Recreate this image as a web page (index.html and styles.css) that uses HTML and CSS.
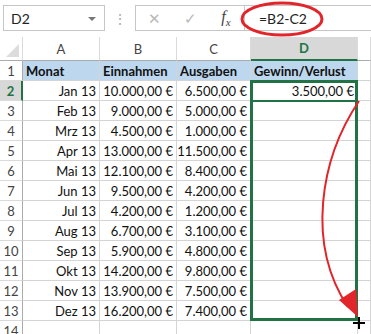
FILE: index.html
```html
<!DOCTYPE html>
<html lang="de">
<head>
  <meta charset="UTF-8" />
  <title>Gewinn/Verlust</title>
  <link rel="stylesheet" href="styles.css">
</head>
<body>

  <div class="fbar">
    <div class="namebox">D2<span class="drop"></span></div>
    <div class="dots">&#8942;</div>
    <div class="btns">
      <span class="btn x">&#10005;</span>
      <span class="btn ok">&#10003;</span>
      <span class="btn fx"><i>f</i><sub>x</sub></span>
    </div>
    <div class="formula">=B2-C2</div>
    <svg class="ring" width="90" height="38" viewBox="0 0 90 38">
      <ellipse cx="43" cy="19" rx="40" ry="16" fill="none" stroke="#e2242b" stroke-width="3"/>
    </svg>
  </div>

  <div class="sheet">
    <div class="hd corner"><span class="tri"></span></div>
    <div class="hd">A</div>
    <div class="hd">B</div>
    <div class="hd">C</div>
    <div class="hd act">D</div>
    <div class="hd"></div>

    <div class="rh">1</div>
    <div class="c th">Monat</div>
    <div class="c th">Einnahmen</div>
    <div class="c th">Ausgaben</div>
    <div class="c th">Gewinn/Verlust</div>
    <div class="c"></div>

    <div class="rh act">2</div>
    <div class="c">Jan 13</div><div class="c">10.000,00 €</div><div class="c">6.500,00 €</div><div class="c">3.500,00 €</div><div class="c"></div>
    <div class="rh">3</div>
    <div class="c">Feb 13</div><div class="c">9.000,00 €</div><div class="c">5.000,00 €</div><div class="c"></div><div class="c"></div>
    <div class="rh">4</div>
    <div class="c">Mrz 13</div><div class="c">4.500,00 €</div><div class="c">1.000,00 €</div><div class="c"></div><div class="c"></div>
    <div class="rh">5</div>
    <div class="c">Apr 13</div><div class="c">13.000,00 €</div><div class="c">11.500,00 €</div><div class="c"></div><div class="c"></div>
    <div class="rh">6</div>
    <div class="c">Mai 13</div><div class="c">12.100,00 €</div><div class="c">8.400,00 €</div><div class="c"></div><div class="c"></div>
    <div class="rh">7</div>
    <div class="c">Jun 13</div><div class="c">9.500,00 €</div><div class="c">4.200,00 €</div><div class="c"></div><div class="c"></div>
    <div class="rh">8</div>
    <div class="c">Jul 13</div><div class="c">4.200,00 €</div><div class="c">1.200,00 €</div><div class="c"></div><div class="c"></div>
    <div class="rh">9</div>
    <div class="c">Aug 13</div><div class="c">6.700,00 €</div><div class="c">3.100,00 €</div><div class="c"></div><div class="c"></div>
    <div class="rh">10</div>
    <div class="c">Sep 13</div><div class="c">5.900,00 €</div><div class="c">4.800,00 €</div><div class="c"></div><div class="c"></div>
    <div class="rh">11</div>
    <div class="c">Okt 13</div><div class="c">14.200,00 €</div><div class="c">9.800,00 €</div><div class="c"></div><div class="c"></div>
    <div class="rh">12</div>
    <div class="c">Nov 13</div><div class="c">13.900,00 €</div><div class="c">7.500,00 €</div><div class="c"></div><div class="c"></div>
    <div class="rh">13</div>
    <div class="c">Dez 13</div><div class="c">16.200,00 €</div><div class="c">7.400,00 €</div><div class="c"></div><div class="c"></div>
    <div class="rh">14</div>
    <div class="c"></div><div class="c"></div><div class="c"></div><div class="c"></div><div class="c"></div>

    <div class="range"></div>
    <div class="cursor"></div>
    <svg class="arrow" width="60" height="230" viewBox="0 0 60 230">
      <path d="M47 2 C 8 60, -6 145, 36 208" fill="none" stroke="#e2242b" stroke-width="2"/>
      <path d="M27 201 L44 190 L46 218 Z" fill="#e2242b"/>
    </svg>
  </div>

</body>
</html>
```

FILE: styles.css
```css
body { margin: 0; width: 371px; height: 334px; overflow: hidden; background: #fff; font-family: Lato, "Open Sans", sans-serif; }

.fbar { position: relative; display: flex; align-items: center; height: 37px; padding: 5px 0 6px 3px; box-sizing: border-box; }
.namebox { position: relative; width: 102px; height: 26px; box-sizing: border-box; border: 1px solid #c6c6c6; padding: 4px 0 0 7px; font-size: 14px; color: #222; }
.drop { position: absolute; right: 8px; top: 11px; border-left: 4px solid transparent; border-right: 4px solid transparent; border-top: 4px solid #777; }
.dots { width: 30px; text-align: center; color: #aaa; font-size: 14px; }
.btns { display: flex; align-items: center; width: 110px; height: 26px; box-sizing: border-box; border: 1px solid #c6c6c6; }
.btn { flex: 1; text-align: center; color: #b8b8b8; font-size: 15px; }
.btn.fx { color: #444; font-family: "Liberation Serif", serif; font-size: 16px; }
.btn.fx sub { font-size: 11px; font-style: italic; }
.formula { flex: 1; height: 26px; box-sizing: border-box; border: 1px solid #c6c6c6; border-right: 0; margin-left: -1px; padding: 4px 0 0 14px; font-size: 14px; color: #222; }
.ring { position: absolute; left: 239px; top: 0; }

.sheet { position: relative; display: grid; grid-template-columns: 23px 77px 77px 74px 107px 1fr; grid-template-rows: 24px repeat(14, 20px); font-size: 13px; }
.hd { display: flex; align-items: center; justify-content: center; border-right: 1px solid #dadada; border-bottom: 1px solid #ababab; color: #444; box-sizing: border-box; }
.hd.act { background: #d8d8d8; color: #217346; font-weight: bold; border-bottom: 2px solid #217346; }
.corner { position: relative; }
.tri { position: absolute; right: 3px; bottom: 3px; border-left: 13px solid transparent; border-bottom: 13px solid #dcdcdc; }
.rh { display: flex; align-items: center; justify-content: center; border-right: 1px solid #ababab; border-bottom: 1px solid #dadada; color: #444; box-sizing: border-box; }
.rh.act { background: #d8d8d8; color: #217346; font-weight: bold; border-right: 2px solid #217346; }
.c { display: flex; align-items: center; justify-content: flex-end; padding-right: 3px; border-right: 1px solid #d4d4d4; border-bottom: 1px solid #d4d4d4; box-sizing: border-box; color: #111; white-space: nowrap; }
.c.th { justify-content: flex-start; padding-left: 3px; background: #bdd7ee; font-weight: bold; }

.range { position: absolute; left: 250px; top: 43px; width: 108px; height: 241px; box-sizing: border-box; border: 3px solid #217346; }
.range::before { content: ""; position: absolute; left: 0; right: 0; top: 17px; border-top: 2px solid #217346; }
.cursor { position: absolute; left: 353px; top: 280px; width: 12px; height: 12px; background: linear-gradient(#000, #000) center / 2px 12px no-repeat, linear-gradient(#000, #000) center / 12px 2px no-repeat; }
.arrow { position: absolute; left: 312px; top: 62px; }
```
